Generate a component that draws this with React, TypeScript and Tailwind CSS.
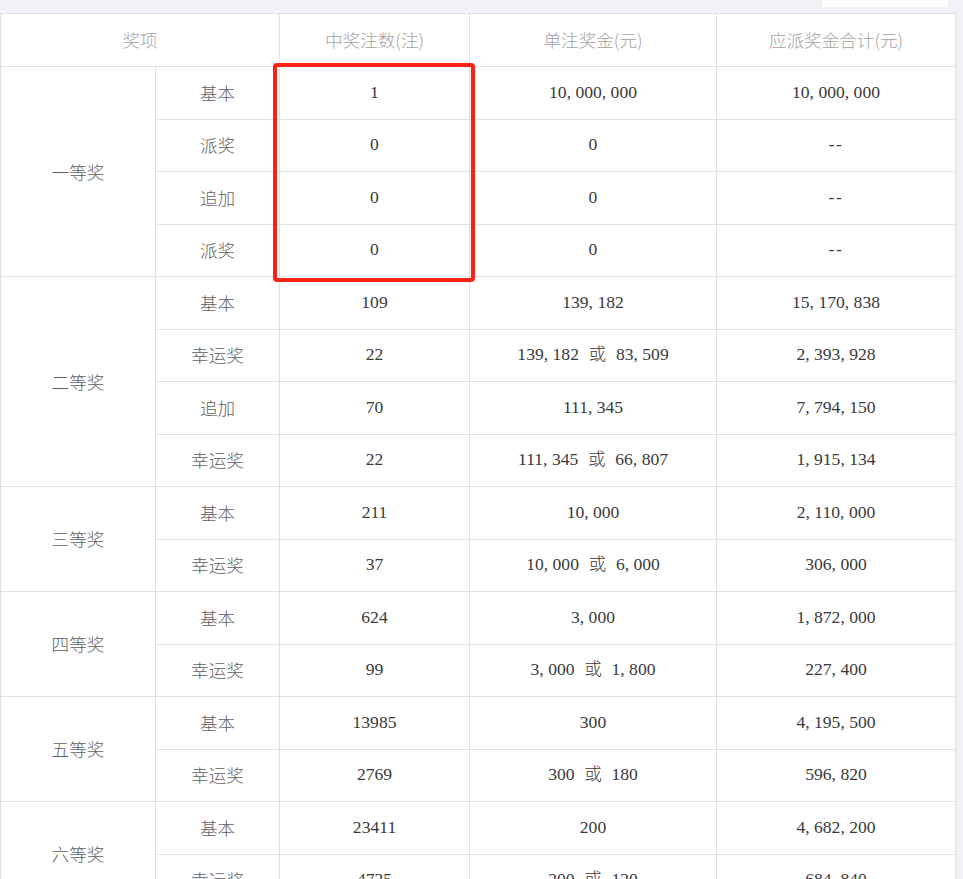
const groups: { name: string; items: string[][] }[] = [
  {
    name: "一等奖",
    items: [
      ["基本", "1", "10,000,000", "10,000,000"],
      ["派奖", "0", "0", "--"],
      ["追加", "0", "0", "--"],
      ["派奖", "0", "0", "--"],
    ],
  },
  {
    name: "二等奖",
    items: [
      ["基本", "109", "139,182", "15,170,838"],
      ["幸运奖", "22", "139,182 或 83,509", "2,393,928"],
      ["追加", "70", "111,345", "7,794,150"],
      ["幸运奖", "22", "111,345 或 66,807", "1,915,134"],
    ],
  },
  {
    name: "三等奖",
    items: [
      ["基本", "211", "10,000", "2,110,000"],
      ["幸运奖", "37", "10,000 或 6,000", "306,000"],
    ],
  },
  {
    name: "四等奖",
    items: [
      ["基本", "624", "3,000", "1,872,000"],
      ["幸运奖", "99", "3,000 或 1,800", "227,400"],
    ],
  },
  {
    name: "五等奖",
    items: [
      ["基本", "13985", "300", "4,195,500"],
      ["幸运奖", "2769", "300 或 180", "596,820"],
    ],
  },
  {
    name: "六等奖",
    items: [
      ["基本", "23411", "200", "4,682,200"],
      ["幸运奖", "4735", "200 或 120", "684,840"],
    ],
  },
];

const cjk = 'font-["Noto_Sans_CJK_SC",sans-serif] font-light';
const num = 'font-["Liberation_Serif","Noto_Sans_CJK_SC",serif] font-light';

// SimSun style half-width comma cell
function Num({ value }: { value: string }) {
  if (value === "--") return <span className="tracking-[0.1em]">--</span>;
  const parts = value.split(",");
  return (
    <>
      {parts.map((p, i) => (
        <span key={i}>
          {p}
          {i < parts.length - 1 && <span className="mr-[0.25em]">,</span>}
        </span>
      ))}
    </>
  );
}

export default function App() {
  const td = "border border-[#dde2e8] text-center align-middle p-0";
  return (
    <div className="min-h-screen w-[963px] bg-[#f0f2f5]">
      <div className="flex h-[13px] w-[956px] justify-end pr-[8px]">
        <div className="h-[7px] w-[126px] bg-white" />
      </div>
      <div className="relative w-[956px]">
        <table className="w-[956px] table-fixed border-collapse bg-white text-[17.6px] leading-none">
          <colgroup>
            <col className="w-[155px]" />
            <col className="w-[124px]" />
            <col className="w-[190px]" />
            <col className="w-[247px]" />
            <col />
          </colgroup>
          <thead>
            <tr className="h-[53px]">
              <th colSpan={2} className={`${td} ${cjk} text-[#a2a2a2]`}>
                奖项
              </th>
              <th className={`${td} ${cjk} text-[#a2a2a2]`}>中奖注数(注)</th>
              <th className={`${td} ${cjk} text-[#a2a2a2]`}>单注奖金(元)</th>
              <th className={`${td} ${cjk} text-[#a2a2a2]`}>应派奖金合计(元)</th>
            </tr>
          </thead>
          <tbody>
            {groups.map((g) =>
              g.items.map((it, i) => (
                <tr key={g.name + i} className="h-[52.5px]">
                  {i === 0 && (
                    <td rowSpan={g.items.length} className={`${td} ${cjk} text-[#5f5f5f]`}>
                      {g.name}
                    </td>
                  )}
                  <td className={`${td} ${cjk} text-[#5f5f5f]`}>{it[0]}</td>
                  <td className={`${td} ${num} text-[#3a3a3a]`}>{it[1]}</td>
                  <td className={`${td} ${num} text-[#3a3a3a] [word-spacing:0.3em]`}>
                    <Num value={it[2]} />
                  </td>
                  <td className={`${td} ${num} text-[#3a3a3a]`}>
                    <Num value={it[3]} />
                  </td>
                </tr>
              ))
            )}
          </tbody>
        </table>
        <div className="pointer-events-none absolute left-[273px] top-[50px] h-[219px] w-[202px] rounded-[4px] border-4 border-[#fe2118]" />
      </div>
    </div>
  );
}
